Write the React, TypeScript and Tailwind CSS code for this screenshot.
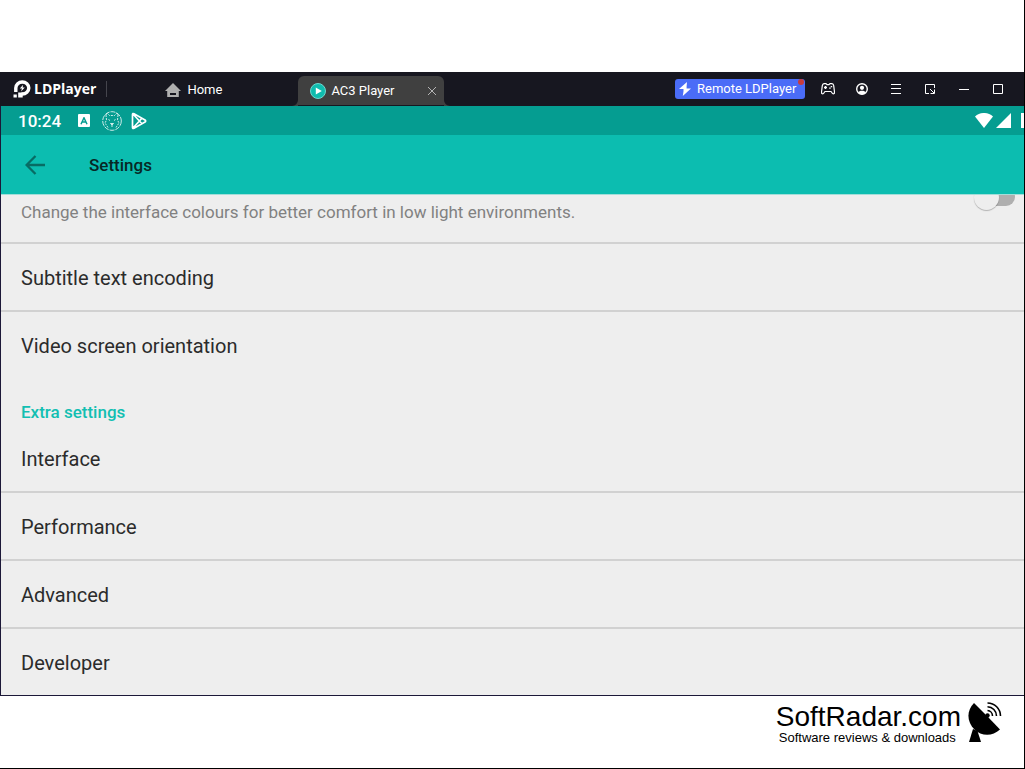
import { useState } from 'react';
import type { ReactNode } from 'react';

interface SettingRowProps {
    label: string;
    last?: boolean;
}

function SettingRow({ label, last }: SettingRowProps) {
    return (
        <li className={last ? '' : 'border-b-2 border-[#d1d1d1]'}>
            <button className="flex h-[66px] w-full items-center pt-[2px] pl-5 text-left text-[20px] leading-6 text-[#2b2b2b]">
                {label}
            </button>
        </li>
    );
}

function WindowButton({ label, children }: { label: string; children: ReactNode }) {
    return (
        <button aria-label={label} className="flex size-4 items-center justify-center text-white">
            {children}
        </button>
    );
}

function LDLogo() {
    return (
        <svg viewBox="0 0 18 18" className="size-[18px]" aria-hidden="true">
            <path
                d="M2.800 12V8A6.500 6 0 1 1 9.300 14H8.500"
                fill="none"
                stroke="white"
                strokeWidth="3.400"
            />
            <path d="M.5 14.500h3.300v3H.5zM5.200 12.500h4.500v5H5.200z" fill="white" />
            <path d="M10.200 4.800 6.800 8.500h2.200l-1 3L11.800 7.500H9.600z" fill="white" />
        </svg>
    );
}

function TitleBar() {
    return (
        <header className="flex h-[34px] items-center bg-[#171720] pr-[18px] text-white">
            <div className="flex items-center gap-[3px] pl-[13px]">
                <LDLogo />
                <span className="font-['Open_Sans',sans-serif] text-[14px] leading-5 font-bold">LDPlayer</span>
            </div>
            <div className="ml-[10px] h-4 w-px bg-[#45454d]" />

            <nav className="flex h-full flex-1 items-center">
                <button className="ml-[58px] flex items-center gap-[6px] pt-[2px] text-[13px] leading-5">
                    <svg viewBox="0 0 16 14" className="h-[14px] w-4" aria-hidden="true">
                        <path d="M8 0 16 8h-2.200v6H2.200V8H0z" fill="#b0b0b0" />
                        <path d="M5 10h6v2H5z" fill="#171720" />
                    </svg>
                    Home
                </button>
                <div className="ml-[70px] flex h-full items-end">
                    <svg viewBox="0 0 6 6" className="size-[6px]" aria-hidden="true">
                        <path d="M6 0v6H0a6 6 0 0 0 6-6z" fill="#404040" />
                    </svg>
                    <div className="mb-px flex h-[29px] w-[146px] items-center rounded-t-md bg-[#404040] pr-2 pl-3">
                        <svg viewBox="0 0 16 16" className="size-4" aria-hidden="true">
                            <circle cx="8" cy="8" r="7.500" fill="#10bcae" stroke="#6fd8cf" />
                            <path d="m5.800 4.500 6 3.500-6 3.500z" fill="white" />
                        </svg>
                        <span className="ml-[5px] flex-1 text-[13px] leading-5">AC3 Player</span>
                        <button aria-label="Close tab">
                            <svg viewBox="0 0 8 8" className="size-2" stroke="#b5b5b5" aria-hidden="true">
                                <path d="m0 0 8 8M8 0 0 8" />
                            </svg>
                        </button>
                    </div>
                    <svg viewBox="0 0 6 6" className="size-[6px]" aria-hidden="true">
                        <path d="M0 0v6h6a6 6 0 0 1-6-6z" fill="#404040" />
                    </svg>
                </div>
            </nav>

            <button className="relative flex h-5 w-[130px] items-center gap-[6px] rounded-[3px] bg-[#4a6cf7] pl-1 text-[13px] leading-5 whitespace-nowrap">
                <svg viewBox="0 0 12 14" className="h-[14px] w-3" aria-hidden="true">
                    <path d="M8 0 0 7h4.500v2.200L3.800 14 12 6.500H7.600V4.500z" fill="white" />
                </svg>
                Remote LDPlayer
                <span className="absolute top-0 right-px size-[6px] rounded-full bg-[#c83c3c]" />
            </button>

            <div className="ml-[15px] flex items-center gap-[18px]">
                <WindowButton label="Gamepad">
                    <svg viewBox="0 0 14 12" className="h-3 w-[14px]" fill="none" stroke="currentColor">
                        <path d="M3 .7h2l1 1h2l1-1h2c1.200 0 1.500.8 1.700 2l.8 6.300c.2 2-1.600 2.400-2.400 1L10 8.500H4L2.900 10C2.100 11.400.3 11 .5 9l.8-6.300C1.500 1.500 1.800.7 3 .7z" strokeWidth="1.200" />
                        <path d="M4.500 3v3M3 4.500h3M8.200 5.200h1.500M9.700 3.700h1.500" strokeWidth="1.300" />
                    </svg>
                </WindowButton>
                <WindowButton label="Account">
                    <svg viewBox="0 0 12 12" className="size-3">
                        <circle cx="6" cy="6" r="5.300" fill="none" stroke="currentColor" strokeWidth="1.400" />
                        <circle cx="6" cy="4.800" r="2.100" fill="currentColor" />
                        <path d="M2.200 9.800c.8-2.600 6.800-2.600 7.600 0C8 12 4 12 2.200 9.800z" fill="currentColor" />
                    </svg>
                </WindowButton>
                <WindowButton label="Menu">
                    <svg viewBox="0 0 10 10" className="size-[10px]" stroke="currentColor">
                        <path d="M0 .5h10M0 4.500h10M0 9.500h10" />
                    </svg>
                </WindowButton>
                <WindowButton label="Mini window">
                    <svg viewBox="0 0 10 10" className="size-[10px]" fill="none" stroke="currentColor">
                        <path d="M4 9.500H.5V.5h9V4M5 5l4 4M9.500 5.500v4h-4" />
                    </svg>
                </WindowButton>
                <WindowButton label="Minimize">
                    <svg viewBox="0 0 10 10" className="size-[10px]" stroke="currentColor">
                        <path d="M0 5.500h10" />
                    </svg>
                </WindowButton>
                <WindowButton label="Maximize">
                    <svg viewBox="0 0 10 10" className="size-[10px]" fill="none" stroke="currentColor">
                        <path d="M.5.5h9v9h-9z" />
                    </svg>
                </WindowButton>
            </div>
        </header>
    );
}

function StatusBar() {
    return (
        <div className="flex h-[29px] items-center overflow-hidden bg-[#059d91] pl-[17px] text-white">
            <time className="text-[17px] leading-6 font-medium">10:24</time>
            <div className="ml-[17px] flex h-[13px] w-3 items-center justify-center rounded-[1px] bg-white">
                <svg viewBox="0 0 8 8" className="size-2" fill="none" stroke="#059d91" aria-hidden="true">
                    <path d="M1 7.200 4 .8l3 6.400M2.200 5h3.600" strokeWidth="1.500" />
                </svg>
            </div>
            <svg viewBox="0 0 20 20" className="ml-3 size-5" fill="none" stroke="white" aria-hidden="true">
                <circle cx="10" cy="10" r="9.300" strokeWidth=".8" strokeDasharray="5 1" />
                <path
                    d="M4 3.500 5.500 2.500 7.500 4.500h5l2-2L16 3.500M4 4l.5 5L3 12l3 4.500M16 4l-.5 5L17 12l-3 4.500"
                    strokeWidth=".8"
                    strokeDasharray="2 1"
                />
                <path d="M6.500 8.500 8 9.500M13.500 8.500l-1.500 1M8.500 12.500h3L10 14zM10 14v2" strokeWidth=".8" />
            </svg>
            <svg viewBox="0 0 16 18" className="ml-[9px] h-[18px] w-4" fill="none" stroke="white" strokeWidth="1.700" strokeLinejoin="round" aria-hidden="true">
                <path d="M1.500 2.500v13q0 1.500 1.500.7L14 10q1.300-1 0-2L3 1.800q-1.500-.8-1.500.7zM2 2l8.700 9.500M2 16l8.700-9.500" />
            </svg>
            <div className="ml-auto flex items-center">
                <svg viewBox="0 0 18 15" className="h-[15px] w-[18px]" aria-hidden="true">
                    <path d="M0 3.500C5-1.200 13-1.200 18 3.500L9 15z" fill="white" />
                </svg>
                <svg viewBox="0 0 15 15" className="ml-[3px] size-[15px]" aria-hidden="true">
                    <path d="M15 0v15H0z" fill="white" />
                </svg>
                <div className="ml-[10px] h-[15px] w-[3px] bg-white" />
            </div>
        </div>
    );
}

function DishLogo() {
    return (
        <svg viewBox="0 0 34 40" className="h-10 w-[34px]" aria-hidden="true">
            <path d="M6 1 18 13 20 15 32 27.500C24 35 13 34 6.500 27.500-1 20-2 9 6 1z" />
            <circle cx="19.500" cy="13.500" r="2.200" />
            <path d="M5 27 1 40h12L9.500 29z" />
            <g fill="none" stroke="black" strokeWidth="1.600">
                <path d="M19.500 8.500a5.500 5.500 0 0 1 5 5.500M19.500 4.700a9.300 9.300 0 0 1 9 9.300M19.500 1a13 13 0 0 1 13 13" />
            </g>
        </svg>
    );
}

export default function App() {
    const [darkMode, setDarkMode] = useState(false);

    return (
        <div className="flex min-h-screen flex-col border-r border-b border-black bg-white pt-[72px] font-['Roboto',sans-serif]">
            <div className="border-b border-[#1c1838]">
                <TitleBar />
                <main className="border-l border-[#1c1838] bg-[#eeeeee]">
                    <StatusBar />
                    <div className="flex h-[59px] items-center bg-[#0cbdb0] pl-6">
                        <button aria-label="Back" className="text-[#086c64]">
                            <svg viewBox="0 0 20 20" className="size-5" fill="none" stroke="currentColor" strokeWidth="2.300">
                                <path d="M20 10H2M10.500 1 1.600 10l8.900 9" />
                            </svg>
                        </button>
                        <h1 className="ml-11 pt-px text-[17px] leading-6 font-medium text-[#072825]">Settings</h1>
                    </div>

                    <label className="flex h-[50px] items-start justify-between overflow-hidden border-t border-b-2 border-t-[#a3ded9] border-b-[#d1d1d1] pr-[9px] pl-5">
                        <span className="pt-[5px] text-[17px] leading-6 text-[#818181]">
                            Change the interface colours for better comfort in low light environments.
                        </span>
                        <input
                            type="checkbox"
                            role="switch"
                            checked={darkMode}
                            onChange={(e) => setDarkMode(e.target.checked)}
                            className="relative -mt-[7px] h-[18px] w-[38px] shrink-0 appearance-none rounded-full bg-[#afafaf] before:absolute before:-top-[3px] before:-left-[3px] before:size-[25px] before:rounded-full before:bg-[#eeeeee] before:shadow-[0_1px_1px_rgba(0,0,0,0.25)] checked:before:left-[17px]"
                        />
                    </label>
                    <ul>
                        <SettingRow label="Subtitle text encoding" />
                        <SettingRow label="Video screen orientation" last />
                    </ul>
                    <h2 className="pt-[22px] pb-px pl-5 text-[17px] leading-6 font-medium text-[#12bfb2]">Extra settings</h2>
                    <ul>
                        <SettingRow label="Interface" />
                        <SettingRow label="Performance" />
                        <SettingRow label="Advanced" />
                        <SettingRow label="Developer" last />
                    </ul>
                </main>
            </div>

            <footer className="flex items-start justify-end gap-[7px] pt-[6px] pr-[22px] font-['Liberation_Sans',sans-serif] text-black">
                <div>
                    <p className="text-[28px] leading-[30px]">SoftRadar.com</p>
                    <p className="pl-[3px] text-[13px] leading-3">Software reviews &amp; downloads</p>
                </div>
                <DishLogo />
            </footer>
        </div>
    );
}
